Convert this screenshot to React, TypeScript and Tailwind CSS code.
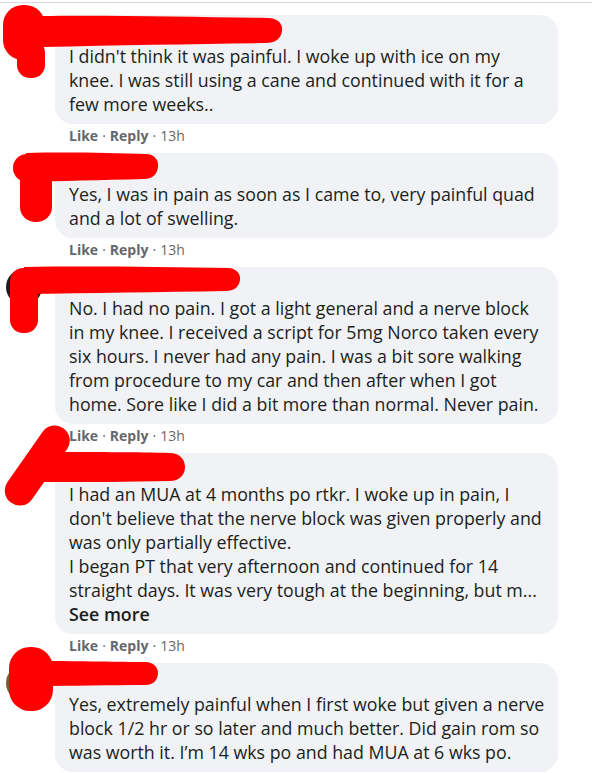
import React from "react";

type Comment = {
  lines: string[];
  seeMore?: boolean;
  avatar: string;
};

const comments: Comment[] = [
  {
    lines: [
      "I didn't think it was painful. I woke up with ice on my",
      "knee. I was still using a cane and continued with it for a",
      "few more weeks..",
    ],
    avatar: "bg-white",
  },
  {
    lines: [
      "Yes, I was in pain as soon as I came to, very painful quad",
      "and a lot of swelling.",
    ],
    avatar: "bg-white",
  },
  {
    lines: [
      "No. I had no pain. I got a light general and a nerve block",
      "in my knee. I received a script for 5mg Norco taken every",
      "six hours. I never had any pain. I was a bit sore walking",
      "from procedure to my car and then after when I got",
      "home. Sore like I did a bit more than normal. Never pain.",
    ],
    avatar: "bg-[#1f1d1b]",
  },
  {
    lines: [
      "I had an MUA at 4 months po rtkr. I woke up in pain, I",
      "don't believe that the nerve block was given properly and",
      "was only partially effective.",
      "I began PT that very afternoon and continued for 14",
      "straight days. It was very tough at the beginning, but m...",
    ],
    seeMore: true,
    avatar: "bg-white",
  },
  {
    lines: [
      "Yes, extremely painful when I first woke but given a nerve",
      "block 1/2 hr or so later and much better. Did gain rom so",
      "was worth it. I\u2019m 14 wks po and had MUA at 6 wks po.",
    ],
    avatar: "bg-[#7a5a3c]",
  },
];

function CommentRow({ c, last }: { c: Comment; last: boolean }) {
  return (
    <div className="flex gap-[11px]">
      <div className="w-[38px] shrink-0 pt-[2px]">
        <div className={`h-[36px] w-[36px] rounded-full ${c.avatar}`} />
      </div>
      <div className="flex flex-col">
        <div className="w-[503px] rounded-[18px] bg-[#f0f2f5] px-[14px] pt-[8px] pb-[8px]">
          {/* author name row, hidden under the marker */}
          <div className="h-[20.5px]" />
          {c.lines.map((l, i) => (
            <div key={i} className="whitespace-nowrap text-[17.8px] leading-[24px] text-[#1c1e21]">
              {l}
            </div>
          ))}
          {c.seeMore && (
            <div className="text-[17.8px] font-semibold leading-[24px] text-[#1c1e21]">See more</div>
          )}
        </div>
        {!last && (
          <div className="mt-[3px] mb-[8.5px] flex h-[18px] items-center pl-[14px] text-[14px] leading-[18px] text-[#65676b]">
            <span className="font-bold">Like</span>
            <span className="px-[4px]">·</span>
            <span className="font-bold">Reply</span>
            <span className="px-[4px]">·</span>
            <span>13h</span>
          </div>
        )}
      </div>
    </div>
  );
}

// red marker strokes that hide names and avatars
function Scribbles() {
  return (
    <svg
      className="pointer-events-none absolute left-0 top-0 h-[773px] w-[608px]"
      viewBox="0 0 608 773"
      fill="#fe0000"
    >
      {/* 1 */}
      <path d="M40 16 C110 15 200 17 268 18 C278 18 283 24 282 31 C281 39 275 43 266 43 C200 44 120 45 42 47 Z" />
      <rect x={3} y={5} width={42} height={55} rx={20} />
      <rect x={17} y={40} width={28} height={38} rx={13} />
      {/* 2 */}
      <path d="M26 153 C70 152 110 153 146 154 C154 154 159 160 158 167 C157 175 152 179 144 179 C100 180 60 181 26 182 Z" />
      <rect x={13} y={154} width={30} height={28} rx={14} />
      <rect x={20} y={158} width={32} height={64} rx={15} />
      {/* 3 */}
      <path d="M24 267 C90 266 160 267 228 268 C236 268 241 274 240 280 C239 287 234 291 226 291 C160 292 90 293 24 294 Z" />
      <rect x={10} y={268} width={28} height={65} rx={13} />
      {/* 4 */}
      <rect x={-8} y={451} width={91} height={30} rx={15} transform="rotate(-55 37 466)" />
      <path d="M40 452 C90 452 140 452 170 453 C180 453 185 460 185 467 C185 475 179 481 170 481 C130 482 80 482 40 482 Z" />
      {/* 5 */}
      <rect x={9} y={647} width={44} height={64} rx={21} />
      <path d="M40 661 C80 661 120 662 146 662 C153 662 158 667 158 673 C158 680 153 685 146 685 C110 685 70 686 40 686 Z" />
    </svg>
  );
}

export default function App() {
  return (
    <div
      className="relative h-[773px] w-[608px] overflow-hidden bg-white pt-[2px]"
      style={{ fontFamily: '"Segoe UI", "Open Sans", sans-serif' }}
    >
      <div className="h-px w-[592px] bg-[#d4d6da]" />
      <div className="flex flex-col pl-[6px] pt-[12px]">
        {comments.map((c, i) => (
          <CommentRow key={i} c={c} last={i === comments.length - 1} />
        ))}
      </div>
      <Scribbles />
    </div>
  );
}
